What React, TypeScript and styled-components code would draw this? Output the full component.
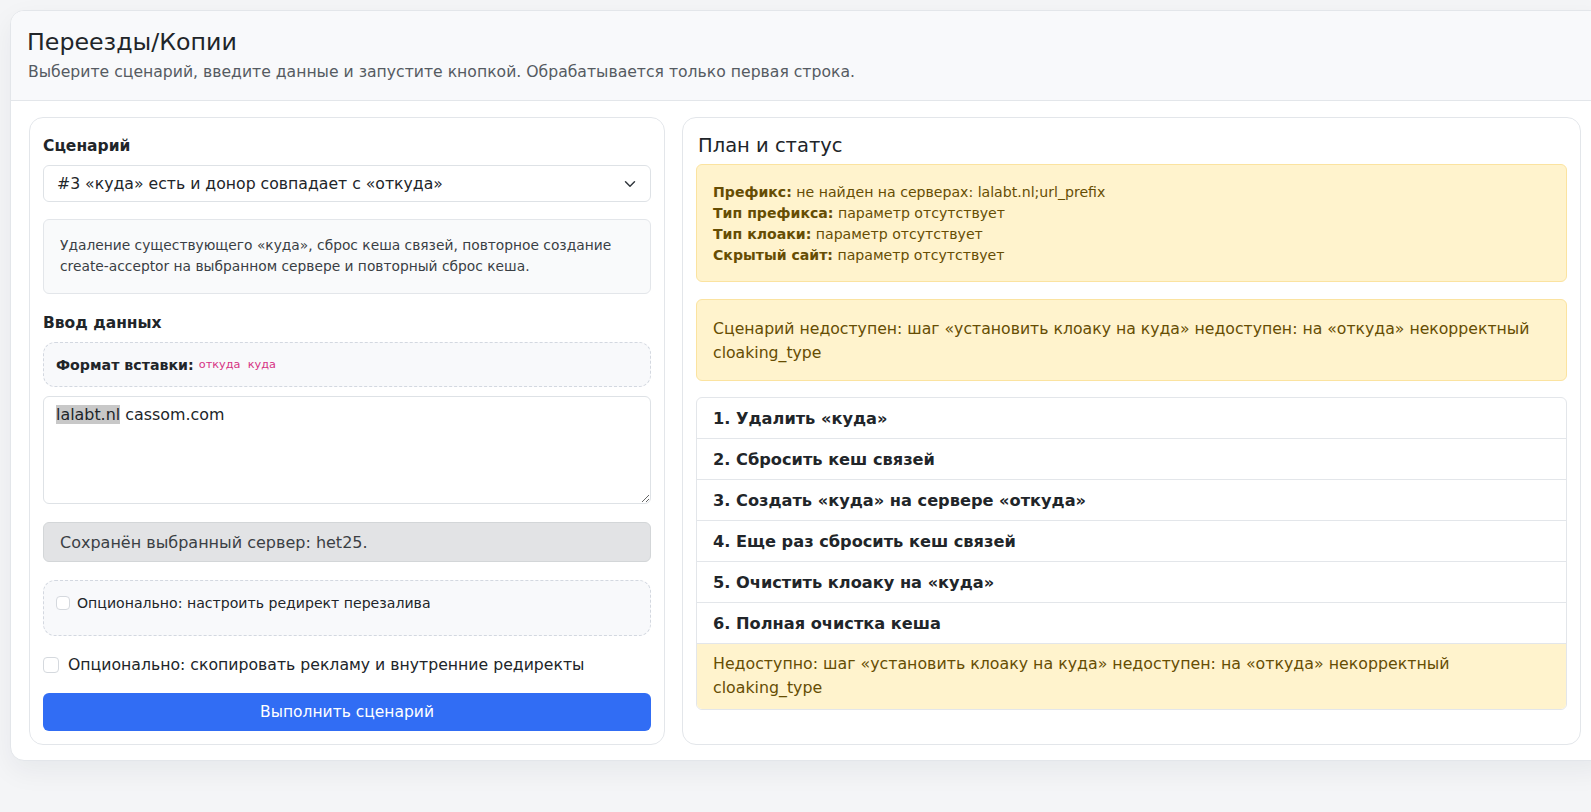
import React from 'react'
import styled, { createGlobalStyle } from 'styled-components'

const GlobalStyle = createGlobalStyle`
  html, body {
    margin: 0;
    padding: 0;
    overflow: hidden;
    background: #f4f5f7;
    font-family: "DejaVu Sans", "Noto Sans", sans-serif;
    color: #212529;
  }
  * {
    box-sizing: border-box;
  }
`

const Page = styled.div`
  padding: 10px 0 0 10px;
  width: 1620px;
  height: 812px;
`

const Shell = styled.div`
  width: 1600px;
  background: #fff;
  border: 1px solid #e3e6ea;
  border-radius: 14px;
  box-shadow: 0 10px 28px rgba(20, 30, 50, 0.06);
  overflow: hidden;
`

const Header = styled.div`
  background: #f8f9fb;
  border-bottom: 1px solid #e3e6ea;
  padding: 16px 17px 17px;
`

const Title = styled.h1`
  margin: 0 0 0 -1px;
  font-size: 23.7px;
  font-weight: 400;
  line-height: 30px;
`

const Subtitle = styled.p`
  margin: 4px 0 0;
  font-size: 15.65px;
  line-height: 22px;
  color: #555b62;
`

const Columns = styled.div`
  display: grid;
  grid-template-columns: 636px 899px;
  gap: 17px;
  padding: 16px 18px 15px;
`

const Panel = styled.section`
  border: 1px solid #e3e6ea;
  border-radius: 14px;
  padding: 13px 13px 13px;
  display: flex;
  flex-direction: column;
`

const Label = styled.div`
  font-size: 15.5px;
  font-weight: 700;
  line-height: 22px;
  margin: 4px 0 8px;
`

const Select = styled.div`
  display: flex;
  align-items: center;
  justify-content: space-between;
  height: 37px;
  padding: 0 14px 0 13px;
  border: 1px solid #dee2e6;
  border-radius: 6px;
  font-size: 15.7px;
`

const Description = styled.div`
  margin-top: 17px;
  background: #f9fafb;
  border: 1px solid #e3e6ea;
  border-radius: 6px;
  padding: 15px 16px 16px;
  font-size: 13.8px;
  line-height: 21px;
  color: #3a3f45;
`

const FormatBox = styled.div`
  height: 45px;
  display: flex;
  align-items: center;
  padding: 0 12px;
  border: 1px dashed #d3d8e0;
  border-radius: 12px;
  background: #f8f9fb;
  font-size: 14.2px;
`

const FormatLabel = styled.span`
  font-weight: 700;
  margin-right: 5px;
`

const Code = styled.code`
  font-family: "DejaVu Sans", sans-serif;
  font-size: 11.3px;
  color: #d63384;
  white-space: pre;
`

const TextArea = styled.div`
  margin-top: 9px;
  height: 108px;
  border: 1px solid #dee2e6;
  border-radius: 6px;
  padding: 7px 12px;
  font-size: 15.9px;
  line-height: 22px;
  resize: vertical;
  overflow: auto;
`

const Selected = styled.span`
  background: #c8c8c8;
`

const Alert = styled.div<{ $tone: 'gray' | 'yellow' }>`
  border-radius: 6px;
  border: 1px solid ${(p) => (p.$tone === 'gray' ? '#d3d6d8' : '#fbe3a0')};
  background: ${(p) => (p.$tone === 'gray' ? '#e2e3e5' : '#fff3cd')};
  color: ${(p) => (p.$tone === 'gray' ? '#3b3f44' : '#664d03')};
`

const ServerAlert = styled(Alert)`
  margin-top: 18px;
  height: 40px;
  padding: 0 16px;
  display: flex;
  align-items: center;
  font-size: 16px;
`

const OptionBox = styled.div`
  margin-top: 18px;
  height: 56px;
  border: 1px dashed #d3d8e0;
  border-radius: 12px;
  background: #f8f9fb;
  padding: 12px 12px;
`

const CheckRow = styled.label<{ $size: number }>`
  display: flex;
  align-items: center;
  gap: ${(p) => (p.$size > 15 ? 9 : 7)}px;
  font-size: ${(p) => p.$size}px;
  line-height: 20px;
  color: #212529;
`

const Box = styled.span<{ $px: number }>`
  width: ${(p) => p.$px}px;
  height: ${(p) => p.$px}px;
  border: 1px solid #d5d9de;
  border-radius: 4px;
  background: #fff;
  flex: none;
`

const PlainCheck = styled.div`
  margin-top: 19px;
`

const RunButton = styled.button`
  margin-top: 18px;
  height: 38px;
  border: none;
  border-radius: 6px;
  background: #316df4;
  color: #fff;
  font-family: inherit;
  font-size: 15.5px;
`

const PanelTitle = styled.h2`
  margin: 2px 0 5px 2px;
  font-size: 19.5px;
  font-weight: 400;
  line-height: 26px;
`

const InfoAlert = styled(Alert)`
  padding: 17px 16px 15px;
  font-size: 14.1px;
  line-height: 21px;
`

const ErrorAlert = styled(Alert)`
  margin-top: 17px;
  padding: 17px 16px 15px;
  font-size: 15.7px;
  line-height: 24px;
`

const Steps = styled.div`
  margin-top: 16px;
  border: 1px solid #e3e6ea;
  border-radius: 6px;
  overflow: hidden;
`

const Step = styled.div`
  height: 41px;
  display: flex;
  align-items: center;
  padding: 0 16px;
  font-size: 16.2px;
  font-weight: 700;
  border-bottom: 1px solid #e3e6ea;
`

const StepNote = styled.div`
  background: #fff3cd;
  color: #664d03;
  padding: 8px 16px 9px;
  font-size: 15.8px;
  line-height: 24px;
`

const Chevron = () => (
  <svg width="12" height="12" viewBox="0 0 16 16" fill="none">
    <path d="M2 5l6 6 6-6" stroke="#343a40" strokeWidth="2" strokeLinecap="round" strokeLinejoin="round" />
  </svg>
)

const steps = [
  '1. Удалить «куда»',
  '2. Сбросить кеш связей',
  '3. Создать «куда» на сервере «откуда»',
  '4. Еще раз сбросить кеш связей',
  '5. Очистить клоаку на «куда»',
  '6. Полная очистка кеша',
]

const info: [string, string][] = [
  ['Префикс:', 'не найден на серверах: lalabt.nl;url_prefix'],
  ['Тип префикса:', 'параметр отсутствует'],
  ['Тип клоаки:', 'параметр отсутствует'],
  ['Скрытый сайт:', 'параметр отсутствует'],
]

export default function App() {
  return (
    <Page>
      <GlobalStyle />
      <Shell>
        <Header>
          <Title>Переезды/Копии</Title>
          <Subtitle>
            Выберите сценарий, введите данные и запустите кнопкой. Обрабатывается только первая строка.
          </Subtitle>
        </Header>
        <Columns>
          <Panel>
            <Label>Сценарий</Label>
            <Select>
              <span>#3 «куда» есть и донор совпадает с «откуда»</span>
              <Chevron />
            </Select>
            <Description>
              Удаление существующего «куда», сброс кеша связей, повторное создание create-acceptor на
              выбранном сервере и повторный сброс кеша.
            </Description>
            <Label style={{ marginTop: 18 }}>Ввод данных</Label>
            <FormatBox>
              <FormatLabel>Формат вставки:</FormatLabel>
              <Code>откуда  куда</Code>
            </FormatBox>
            <TextArea>
              <Selected>lalabt.nl</Selected> cassom.com
            </TextArea>
            <ServerAlert $tone="gray">Сохранён выбранный сервер: het25.</ServerAlert>
            <OptionBox>
              <CheckRow $size={14.1}>
                <Box $px={14} />
                Опционально: настроить редирект перезалива
              </CheckRow>
            </OptionBox>
            <PlainCheck>
              <CheckRow $size={15.7}>
                <Box $px={16} />
                Опционально: скопировать рекламу и внутренние редиректы
              </CheckRow>
            </PlainCheck>
            <RunButton>Выполнить сценарий</RunButton>
          </Panel>
          <Panel>
            <PanelTitle>План и статус</PanelTitle>
            <InfoAlert $tone="yellow">
              {info.map(([k, v]) => (
                <div key={k}>
                  <b>{k}</b> {v}
                </div>
              ))}
            </InfoAlert>
            <ErrorAlert $tone="yellow">
              Сценарий недоступен: шаг «установить клоаку на куда» недоступен: на «откуда» некорректный
              cloaking_type
            </ErrorAlert>
            <Steps>
              {steps.map((s) => (
                <Step key={s}>{s}</Step>
              ))}
              <StepNote>
                Недоступно: шаг «установить клоаку на куда» недоступен: на «откуда» некорректный
                cloaking_type
              </StepNote>
            </Steps>
          </Panel>
        </Columns>
      </Shell>
    </Page>
  )
}
